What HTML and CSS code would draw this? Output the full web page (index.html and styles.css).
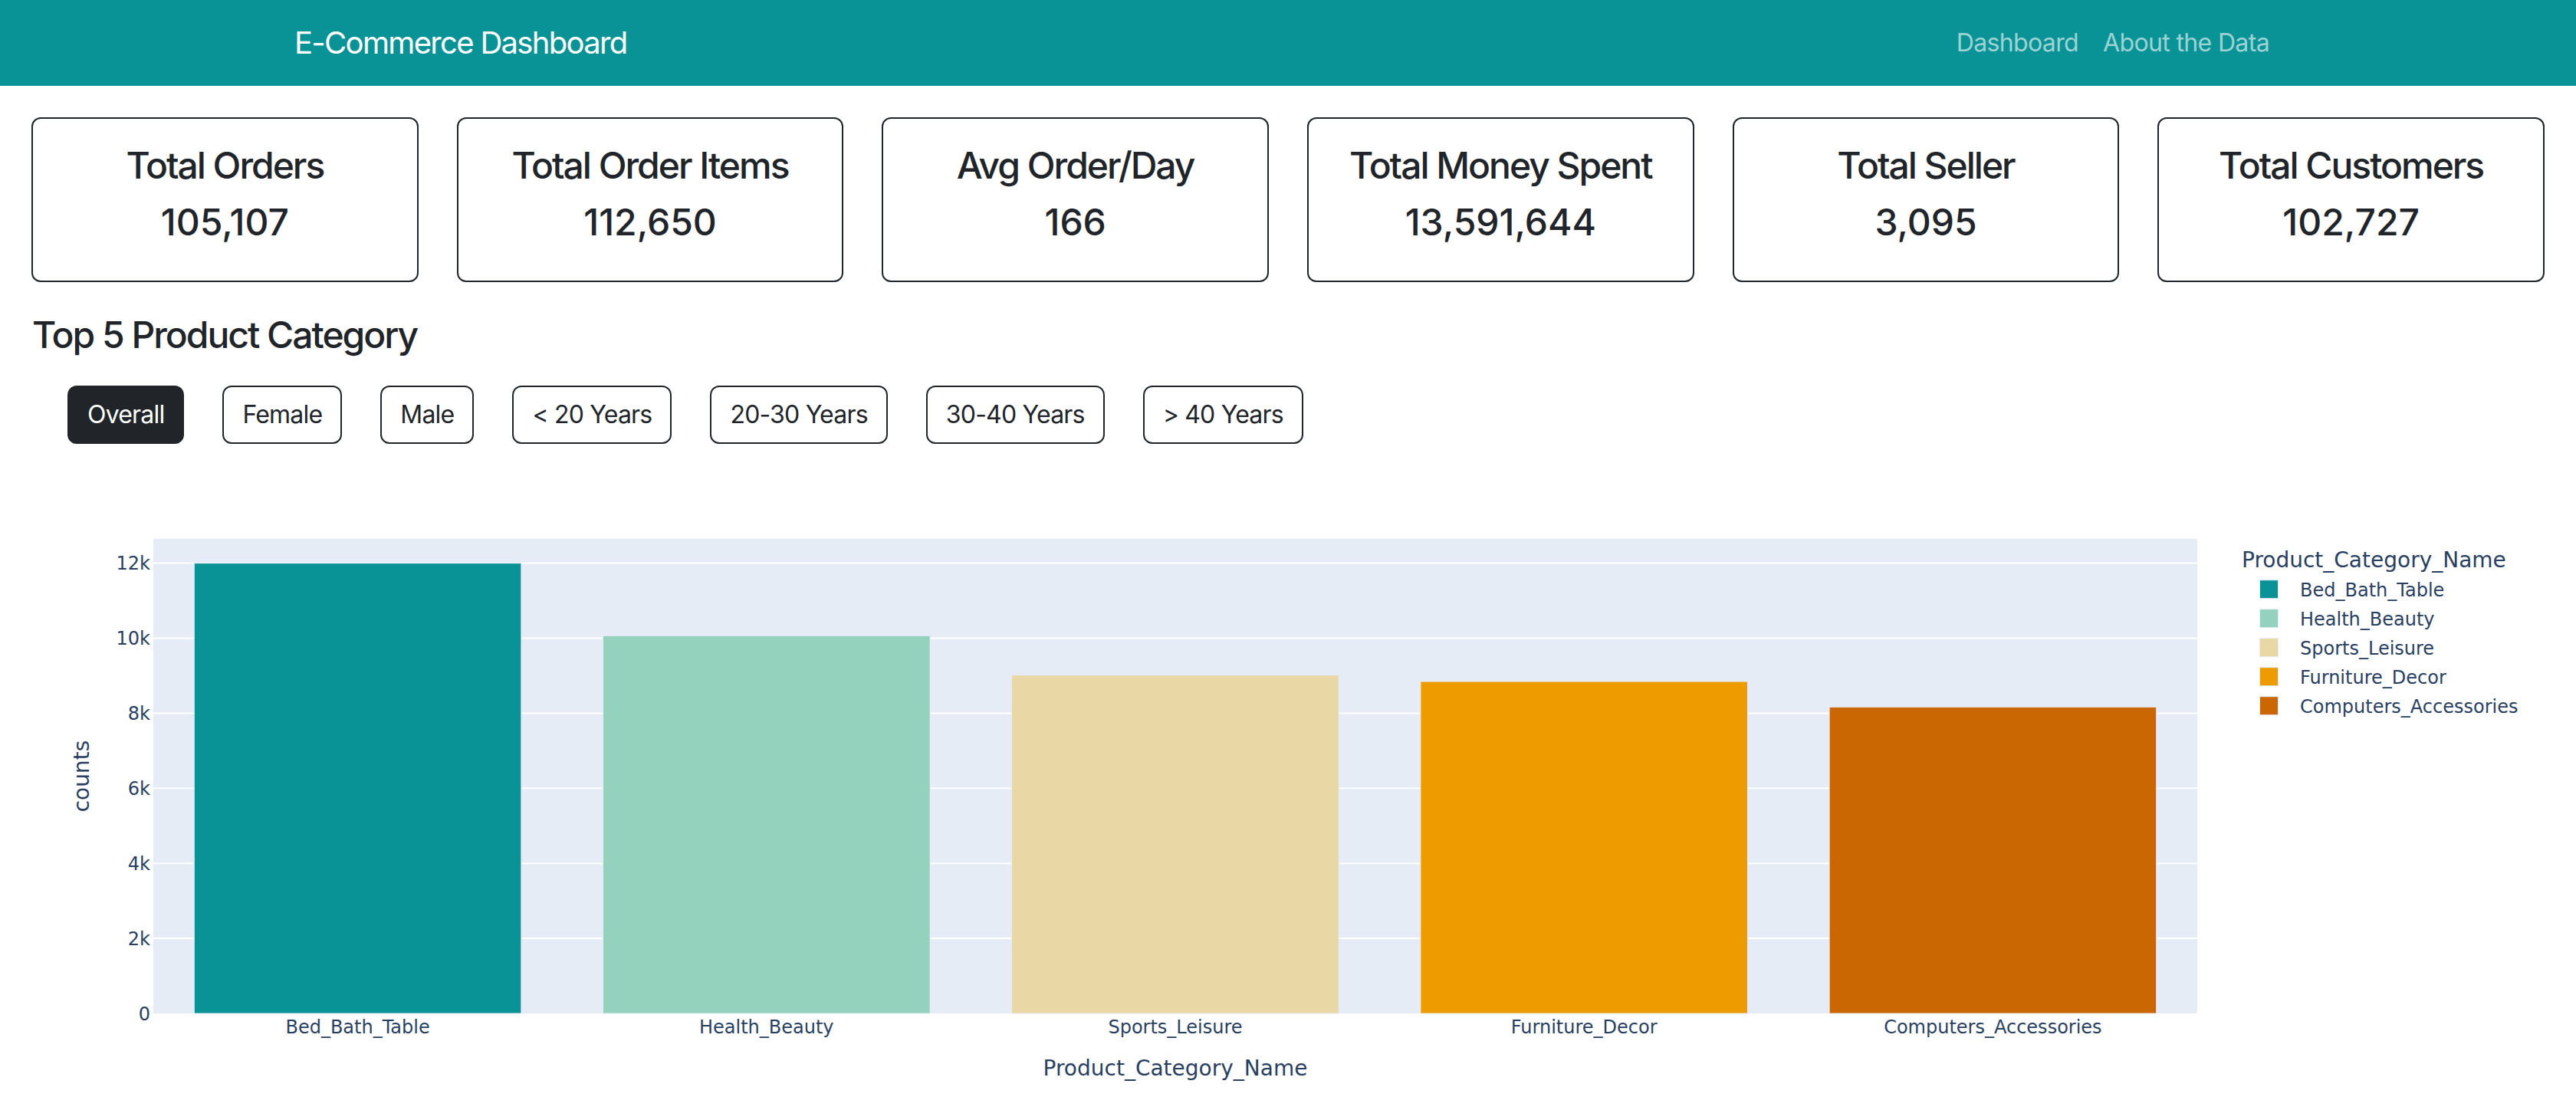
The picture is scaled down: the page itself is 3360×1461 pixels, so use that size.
FILE: index.html
```html
<!DOCTYPE html>
<html lang="en">
<head>
<meta charset="utf-8">
<title>E-Commerce Dashboard</title>
<link rel="stylesheet" href="styles.css">
</head>
<body>
<nav class="navbar">
  <div class="nav-inner">
    <a class="brand" href="#">E-Commerce Dashboard</a>
    <div class="nav-links">
      <a class="nav-link" href="#">Dashboard</a>
      <a class="nav-link" href="#">About the Data</a>
    </div>
  </div>
</nav>
<main class="page">
  <section class="cards">
    <div class="card"><h4 class="card-title">Total Orders</h4><h4 class="card-value">105,107</h4></div>
    <div class="card"><h4 class="card-title">Total Order Items</h4><h4 class="card-value">112,650</h4></div>
    <div class="card"><h4 class="card-title">Avg Order/Day</h4><h4 class="card-value">166</h4></div>
    <div class="card"><h4 class="card-title">Total Money Spent</h4><h4 class="card-value">13,591,644</h4></div>
    <div class="card"><h4 class="card-title">Total Seller</h4><h4 class="card-value">3,095</h4></div>
    <div class="card"><h4 class="card-title">Total Customers</h4><h4 class="card-value">102,727</h4></div>
  </section>
  <h4 class="section-title">Top 5 Product Category</h4>
  <div class="filters">
    <button class="btn btn-active">Overall</button>
    <button class="btn">Female</button>
    <button class="btn">Male</button>
    <button class="btn">&lt; 20 Years</button>
    <button class="btn">20-30 Years</button>
    <button class="btn">30-40 Years</button>
    <button class="btn">&gt; 40 Years</button>
  </div>
  <div class="chart">
    <svg class="chart-svg" width="3278" height="876" viewBox="0 0 3278 876">
      <rect x="159" y="120" width="2666" height="619" fill="#E5ECF6"/>
      <g stroke="#ffffff" stroke-width="2">
        <line x1="159" x2="2825" y1="641.1" y2="641.1"/>
        <line x1="159" x2="2825" y1="543.2" y2="543.2"/>
        <line x1="159" x2="2825" y1="445.3" y2="445.3"/>
        <line x1="159" x2="2825" y1="347.4" y2="347.4"/>
        <line x1="159" x2="2825" y1="249.5" y2="249.5"/>
        <line x1="159" x2="2825" y1="151.6" y2="151.6"/>
      </g>
      <g stroke="#E5ECF6" stroke-width="1">
        <rect x="212.3" y="151.7" width="426.6" height="587.3" fill="#0a9396"/>
        <rect x="745.5" y="246.3" width="426.6" height="492.7" fill="#94d2bd"/>
        <rect x="1278.7" y="297.7" width="426.6" height="441.3" fill="#e9d8a6"/>
        <rect x="1811.9" y="306" width="426.6" height="433" fill="#ee9b00"/>
        <rect x="2345.1" y="339.3" width="426.6" height="399.7" fill="#ca6702"/>
      </g>
      <g class="tick" text-anchor="end">
        <text x="155" y="747.5">0</text>
        <text x="155" y="649.6">2k</text>
        <text x="155" y="551.7">4k</text>
        <text x="155" y="453.8">6k</text>
        <text x="155" y="355.9">8k</text>
        <text x="155" y="258">10k</text>
        <text x="155" y="160.1">12k</text>
      </g>
      <g class="tick" text-anchor="middle">
        <text x="425.6" y="765">Bed_Bath_Table</text>
        <text x="958.8" y="765">Health_Beauty</text>
        <text x="1492" y="765">Sports_Leisure</text>
        <text x="2025.2" y="765">Furniture_Decor</text>
        <text x="2558.4" y="765">Computers_Accessories</text>
      </g>
      <text class="axis-title" x="1492" y="820" text-anchor="middle">Product_Category_Name</text>
      <text class="axis-title" x="75" y="429.5" text-anchor="middle" transform="rotate(-90 75 429.5)">counts</text>
      <text class="axis-title" x="2883" y="156.7">Product_Category_Name</text>
      <g stroke="#E5ECF6" stroke-width="1">
        <rect x="2906.5" y="173.7" width="24" height="24" fill="#0a9396"/>
        <rect x="2906.5" y="211.7" width="24" height="24" fill="#94d2bd"/>
        <rect x="2906.5" y="249.7" width="24" height="24" fill="#e9d8a6"/>
        <rect x="2906.5" y="287.7" width="24" height="24" fill="#ee9b00"/>
        <rect x="2906.5" y="325.7" width="24" height="24" fill="#ca6702"/>
      </g>
      <g class="tick">
        <text x="2959" y="195">Bed_Bath_Table</text>
        <text x="2959" y="233">Health_Beauty</text>
        <text x="2959" y="271">Sports_Leisure</text>
        <text x="2959" y="309">Furniture_Decor</text>
        <text x="2959" y="347">Computers_Accessories</text>
      </g>
    </svg>
  </div>
</main>
</body>
</html>
```
FILE: styles.css
```css
html, body {
  margin: 0;
  padding: 0;
  overflow: hidden;
  background: #ffffff;
}
body {
  font-family: Inter, "Liberation Sans", sans-serif;
  color: #212529;
}
.navbar {
  background: #0a9396;
  height: 112px;
  display: flex;
  align-items: center;
}
.nav-inner {
  width: 2640px;
  margin: 0 auto;
  padding: 0 24px;
  box-sizing: border-box;
  display: flex;
  justify-content: space-between;
  align-items: center;
}
.brand {
  color: #ffffff;
  font-size: 40px;
  letter-spacing: -0.042em;
  text-decoration: none;
  line-height: 1.5;
}
.nav-links {
  display: flex;
}
.nav-link {
  color: rgba(255, 255, 255, 0.6);
  font-size: 32px;
  letter-spacing: -0.02em;
  text-decoration: none;
  padding: 0 16px;
  line-height: 1.5;
}
.page {
  padding: 41px 41px 0 41px;
}
.cards {
  display: grid;
  grid-template-columns: repeat(6, 1fr);
  column-gap: 50px;
}
.card {
  border: 2px solid #212529;
  border-radius: 12px;
  padding: 32px;
  text-align: center;
}
.card-title, .card-value, .section-title {
  font-size: 48px;
  font-weight: 500;
  letter-spacing: -0.042em;
  line-height: 1.2;
  margin: 0 0 16px 0;
}
.card-value {
  letter-spacing: 0;
}
.section-title {
  margin-top: 40px;
  margin-left: 1px;
}
.filters {
  display: flex;
  gap: 50px;
  margin-top: 37px;
  padding-left: 47px;
}
.btn {
  font-family: Inter, "Liberation Sans", sans-serif;
  font-size: 32px;
  font-feature-settings: "calt" 0;
  letter-spacing: -0.025em;
  line-height: 48px;
  height: 76px;
  padding: 12px 24px;
  box-sizing: border-box;
  border: 2px solid #212529;
  border-radius: 12px;
  background: #ffffff;
  color: #212529;
}
.btn-active {
  background: #212529;
  color: #ffffff;
}
.chart {
  margin-top: 4px;
}
.chart-svg {
  display: block;
}
.tick {
  font-family: "DejaVu Sans", Verdana, sans-serif;
  font-size: 24px;
  fill: #2a3f5f;
}
.axis-title {
  font-family: "DejaVu Sans", Verdana, sans-serif;
  font-size: 28px;
  fill: #2a3f5f;
}
```
